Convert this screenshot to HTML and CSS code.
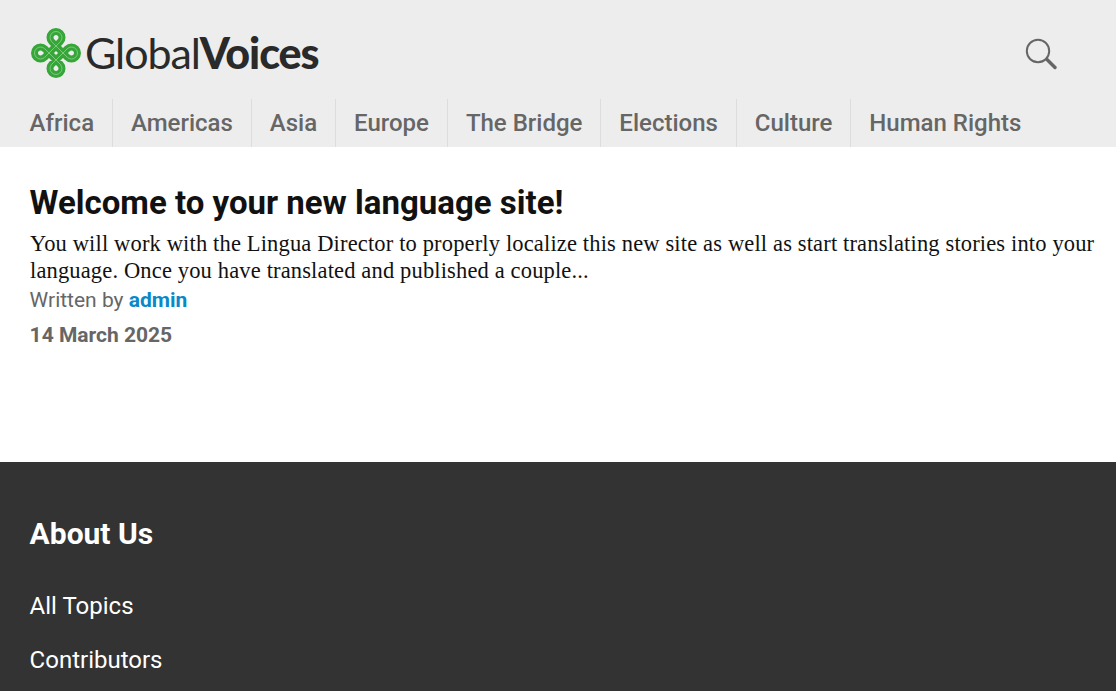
FILE: index.html
```html
<!DOCTYPE html>
<html lang="en">
<head>
<meta charset="utf-8">
<title>Global Voices</title>
<link rel="stylesheet" href="styles.css">
</head>
<body>
<header class="site-header">
  <div class="masthead">
    <a class="logo" href="#">
      <svg class="logo-mark" viewBox="0 0 52 52" width="52" height="52" aria-hidden="true">
        <defs>
          <path id="knot" d="M26 19 L33 26 L37.24 30.24 A6 6 0 1 0 37.24 21.76 L33 26 L26 33 L21.76 37.24 A6 6 0 1 0 30.24 37.24 L26 33 L19 26 L14.76 21.76 A6 6 0 1 0 14.76 30.24 L19 26 L26 19 L30.24 14.76 A6 6 0 1 0 21.76 14.76 Z"/>
        </defs>
        <use href="#knot" class="knot-band"/>
        <use href="#knot" class="knot-line"/>
      </svg>
      <span class="logo-text"><span class="logo-light">Global</span><span class="logo-bold">Voices</span></span>
    </a>
    <a class="search" href="#" aria-label="Search">
      <svg viewBox="0 0 32 32" width="32" height="32" aria-hidden="true">
        <circle cx="13" cy="13" r="11.2" fill="none" stroke="#666" stroke-width="2"/>
        <path d="M22 21.5 L30 29.5" stroke="#666" stroke-width="3.4" stroke-linecap="round"/>
      </svg>
    </a>
  </div>
  <nav class="main-nav">
    <a href="#">Africa</a>
    <a href="#">Americas</a>
    <a href="#">Asia</a>
    <a href="#">Europe</a>
    <a href="#">The Bridge</a>
    <a href="#">Elections</a>
    <a href="#">Culture</a>
    <a href="#">Human Rights</a>
  </nav>
</header>
<main class="content">
  <article class="post">
    <h2 class="post-title">Welcome to your new language site!</h2>
    <p class="post-excerpt">You will work with the Lingua Director to properly localize this new site as well as start translating stories into your language. Once you have translated and published a couple...</p>
    <p class="post-author">Written by <a href="#">admin</a></p>
    <p class="post-date">14 March 2025</p>
  </article>
</main>
<footer class="site-footer">
  <h3>About Us</h3>
  <ul>
    <li><a href="#">All Topics</a></li>
    <li><a href="#">Contributors</a></li>
  </ul>
</footer>
</body>
</html>
```
FILE: styles.css
```css
* { box-sizing: border-box; }
html, body { margin: 0; padding: 0; }
body { font-family: Roboto, sans-serif; background: #fff; height: 691px; overflow: hidden; }
a { text-decoration: none; color: inherit; }

.site-header { background: #ededed; height: 147px; padding: 0 0 0 30px; }
.masthead { display: flex; align-items: center; justify-content: space-between; height: 99px; padding: 7px 59px 0 0; }
.logo { display: flex; align-items: center; }
.logo-mark { display: block; }
.knot-band { fill: none; stroke: #35a637; stroke-width: 7; stroke-linejoin: round; }
.knot-line { fill: none; stroke: #8fd08f; stroke-width: 0.8; stroke-linejoin: round; }
.logo-text { font-family: Lato, sans-serif; font-size: 43px; color: #2a2a2a; letter-spacing: -1.1px; margin-left: 3px; line-height: 52px; }
.logo-light { font-weight: 400; }
.logo-bold { font-weight: 900; }
.search { display: block; height: 32px; margin-top: 1px; }
.search svg { display: block; }

.main-nav { display: flex; height: 48px; margin-left: -0.4px; }
.main-nav a { font-size: 24px; font-weight: 500; color: #666; line-height: 48px; padding: 0 17.97px; border-left: 1px solid #ddd; }
.main-nav a:first-child { padding-left: 0; border-left: 0; }

.content { height: 315px; padding: 37px 20px 0 30px; }
.post-title { margin: 0 0 0 -0.4px; font-size: 33px; font-weight: 700; line-height: 38px; color: #111; }
.post-excerpt { margin: 8px 0 0; font-family: "Liberation Serif", serif; font-size: 22.5px; letter-spacing: 0.15px; line-height: 27px; color: #111; }
.post-author { margin: 2px 0 0 -0.4px; font-size: 21px; line-height: 28px; color: #666; }
.post-author a { color: #0a88c8; font-weight: 700; }
.post-date { margin: 7px 0 0 -0.4px; font-size: 21px; line-height: 28px; font-weight: 700; color: #666; }

.site-footer { background: #333; height: 229px; padding: 53px 30px 0 29.6px; color: #fff; }
.site-footer h3 { margin: 0; font-size: 30px; font-weight: 700; line-height: 38px; }
.site-footer ul { list-style: none; margin: 39px 0 0; padding: 0; }
.site-footer li { font-size: 24px; line-height: 28px; margin-bottom: 26px; }
```
